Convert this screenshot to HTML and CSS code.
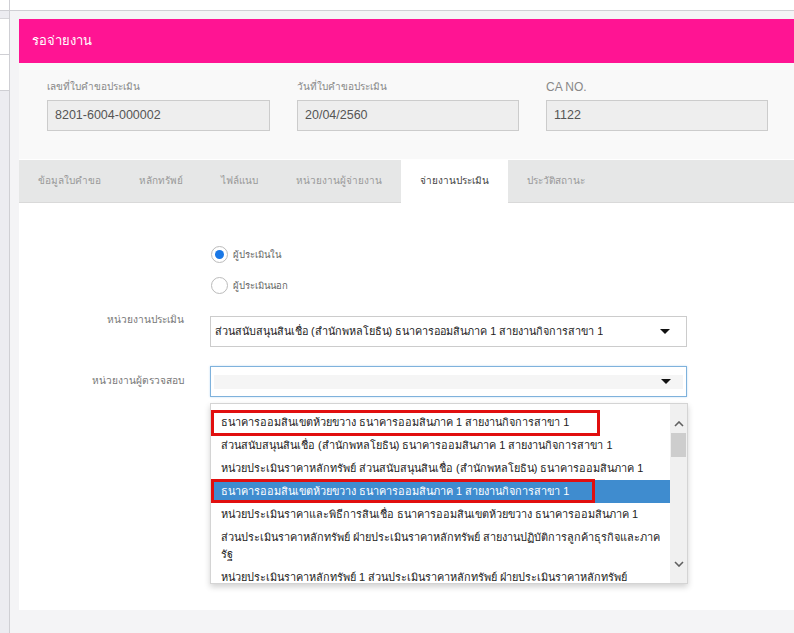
FILE: index.html
```html
<!DOCTYPE html>
<html lang="th">
<head>
<meta charset="utf-8">
<title>รอจ่ายงาน</title>
<link rel="stylesheet" href="styles.css">
</head>
<body>
<div class="app">
  <aside class="sidebar">
    <div class="sb-top"></div>
    <div class="sb-band"></div>
    <div class="sb-item"></div>
    <div class="sb-item"></div>
  </aside>
  <div class="main">
    <div class="topbar"></div>
    <div class="content">
      <div class="card">
        <div class="card-header">รอจ่ายงาน</div>
        <div class="info">
          <div class="field">
            <label class="field-label">เลขที่ใบคำขอประเมิน</label>
            <div class="field-input">8201-6004-000002</div>
          </div>
          <div class="field">
            <label class="field-label">วันที่ใบคำขอประเมิน</label>
            <div class="field-input">20/04/2560</div>
          </div>
          <div class="field">
            <label class="field-label latin">CA NO.</label>
            <div class="field-input">1122</div>
          </div>
        </div>
        <div class="tabs">
          <div class="tab">ข้อมูลใบคำขอ</div>
          <div class="tab">หลักทรัพย์</div>
          <div class="tab">ไฟล์แนบ</div>
          <div class="tab">หน่วยงานผู้จ่ายงาน</div>
          <div class="tab active">จ่ายงานประเมิน</div>
          <div class="tab">ประวัติสถานะ</div>
        </div>
        <div class="tab-body">
          <div class="form">
            <div class="form-label"></div>
            <div class="radios">
              <div class="radio"><span class="radio-dot checked"></span><span>ผู้ประเมินใน</span></div>
              <div class="radio"><span class="radio-dot"></span><span>ผู้ประเมินนอก</span></div>
            </div>
            <div class="form-label row1">หน่วยงานประเมิน</div>
            <div class="select row1">
              <span class="select-text">ส่วนสนับสนุนสินเชื่อ (สำนักพหลโยธิน) ธนาคารออมสินภาค 1 สายงานกิจการสาขา 1</span>
              <span class="caret"></span>
            </div>
            <div class="form-label row2">หน่วยงานผู้ตรวจสอบ</div>
            <div class="select-wrap row2">
              <div class="select focus">
                <span class="select-empty"></span>
                <span class="caret"></span>
              </div>
              <div class="dropdown">
                <ul class="options">
                  <li class="option marked m1">ธนาคารออมสินเขตห้วยขวาง ธนาคารออมสินภาค 1 สายงานกิจการสาขา 1</li>
                  <li class="option">ส่วนสนับสนุนสินเชื่อ (สำนักพหลโยธิน) ธนาคารออมสินภาค 1 สายงานกิจการสาขา 1</li>
                  <li class="option">หน่วยประเมินราคาหลักทรัพย์ ส่วนสนับสนุนสินเชื่อ (สำนักพหลโยธิน) ธนาคารออมสินภาค 1</li>
                  <li class="option hl marked m2">ธนาคารออมสินเขตห้วยขวาง ธนาคารออมสินภาค 1 สายงานกิจการสาขา 1</li>
                  <li class="option">หน่วยประเมินราคาและพิธีการสินเชื่อ ธนาคารออมสินเขตห้วยขวาง ธนาคารออมสินภาค 1</li>
                  <li class="option">ส่วนประเมินราคาหลักทรัพย์ ฝ่ายประเมินราคาหลักทรัพย์ สายงานปฏิบัติการลูกค้าธุรกิจและภาค<br>รัฐ</li>
                  <li class="option">หน่วยประเมินราคาหลักทรัพย์ 1 ส่วนประเมินราคาหลักทรัพย์ ฝ่ายประเมินราคาหลักทรัพย์</li>
                </ul>
                <div class="scrollbar">
                  <svg class="arrow up" width="10" height="6" viewBox="0 0 10 6"><path d="M1 5 L5 1 L9 5" fill="none" stroke="#606060" stroke-width="1.6"/></svg>
                  <div class="thumb"></div>
                  <div class="track"></div>
                  <svg class="arrow down" width="10" height="6" viewBox="0 0 10 6"><path d="M1 1 L5 5 L9 1" fill="none" stroke="#606060" stroke-width="1.6"/></svg>
                </div>
              </div>
            </div>
          </div>
        </div>
      </div>
    </div>
  </div>
</div>
</body>
</html>
```

FILE: styles.css
```css
*, *::before, *::after { box-sizing: border-box; }
html, body { margin: 0; padding: 0; }
body {
  font-family: "Liberation Sans", "Noto Sans", sans-serif;
  color: #333;
  background: #f6f6f6;
  width: 794px;
  height: 633px;
  overflow: hidden;
}
.app { display: flex; height: 633px; }
.sidebar {
  width: 10px;
  background: #ececf1;
  border-right: 1px solid #cfcfd4;
  display: flex;
  flex-direction: column;
}
.sb-top { height: 11px; background: #fff; border-bottom: 1px solid #cfcfd4; }
.sb-band { height: 8px; background: #ececf1; border-bottom: 1px solid #d6d6da; }
.sb-item { height: 36px; background: #fff; border-bottom: 1px solid #cfcfd4; }
.main { flex: 1; display: flex; flex-direction: column; }
.topbar { height: 11px; background: #fff; border-bottom: 1px solid #cfcfd4; }
.content { flex: 1; background: #f4f4f6; padding: 8px 0 0 9px; }
.card { background: #fff; }
.card-header {
  height: 44px;
  background: #ff1493;
  color: #fff;
  font-size: 13px;
  line-height: 44px;
  padding-left: 13px;
}
.info {
  background: #f9f9f9;
  display: grid;
  grid-template-columns: 223px 222px 222px;
  column-gap: 27px;
  padding: 17px 0 28px 28px;
  border-bottom: 1px solid #fff;
}
.field-label {
  display: block;
  font-size: 10px;
  color: #888;
  line-height: 14px;
  height: 14px;
  margin-bottom: 6px;
}
.field-label.latin { font-size: 12px; }
.field-input {
  height: 31px;
  background: #eee;
  border: 1px solid #ccc;
  font-size: 12.5px;
  color: #555;
  line-height: 29px;
  padding-left: 7px;
}
.tabs {
  display: flex;
  height: 43px;
  background: #e6e7e7;
  border-bottom: 1px solid #d9d9d9;
}
.tab {
  padding: 0 19px;
  line-height: 42px;
  font-size: 10px;
  color: #999;
}
.tab.active { background: #fff; color: #444; height: 43px; }
.tab-body {
  height: 407px;
  background: #fff;
}
.form {
  display: grid;
  grid-template-columns: 165px 477px;
  column-gap: 26px;
  padding-top: 43px;
}
.form-label {
  text-align: right;
  font-size: 10.2px;
  color: #777;
}
.form-label.row1 { margin-top: 11px; line-height: 30px; }
.form-label.row2 { margin-top: 19px; line-height: 30px; }
.radios { display: flex; flex-direction: column; gap: 14px; padding-left: 1px; }
.radio { display: flex; align-items: center; gap: 5px; font-size: 9.5px; color: #666; height: 17px; }
.radio-dot {
  width: 17px; height: 17px;
  border: 1px solid #bbb;
  border-radius: 50%;
  display: flex; align-items: center; justify-content: center;
  background: #fff;
}
.radio-dot.checked::after {
  content: "";
  width: 9px; height: 9px;
  border-radius: 50%;
  background: #1a78e6;
}
.select {
  height: 31px;
  border: 1px solid #ccc;
  display: flex;
  align-items: center;
  justify-content: space-between;
  padding: 0 16px 0 4px;
  background: #fff;
}
.select.row1 { margin-top: 22px; }
.select-text { font-size: 10.8px; color: #222; white-space: nowrap; overflow: hidden; }
.caret {
  width: 0; height: 0;
  border-left: 5px solid transparent;
  border-right: 5px solid transparent;
  border-top: 5px solid #111;
  flex: none;
}
.select-wrap { position: relative; margin-top: 19px; }
.select.focus {
  border-color: #7fb2dc;
  padding: 0 3px 0 3px;
  box-shadow: 0 0 2px rgba(102,175,233,0.4);
}
.select.focus .select-empty {
  flex: 1;
  height: 14px;
  background: #f5f5f5;
}
.select.focus .caret { position: absolute; right: 16px; top: 13px; }
.dropdown {
  position: absolute;
  left: 0;
  top: 37px;
  width: 478px;
  height: 181px;
  background: #fff;
  border: 1px solid #d4d4d4;
  box-shadow: 0 3px 6px rgba(0,0,0,0.18);
  overflow: hidden;
}
.options {
  list-style: none;
  margin: 0;
  padding: 7px 17px 0 0;
}
.option {
  position: relative;
  font-size: 10.9px;
  line-height: 17px;
  padding: 3px 8px 3px 10px;
  color: #222;
  white-space: nowrap;
}
.option.hl { background: #3f8ccf; color: #fff; }
.option.marked::after {
  content: "";
  position: absolute;
  left: 0;
  top: -1px;
  border: 3px solid #e10f0f;
}
.option.m1::after { width: 389px; height: 26px; }
.option.m2::after { width: 384px; height: 24px; }
.scrollbar {
  position: absolute;
  top: 0; right: 0; bottom: 0;
  width: 17px;
  background: #f0f0f0;
  display: flex;
  flex-direction: column;
  align-items: center;
}
.arrow { margin-top: 17px; flex: none; }
.thumb { width: 15px; height: 24px; background: #cdcdcd; margin-top: 6px; }
.track { flex: 1; }
.arrow.down { margin: 0 0 16px 0; }
```
